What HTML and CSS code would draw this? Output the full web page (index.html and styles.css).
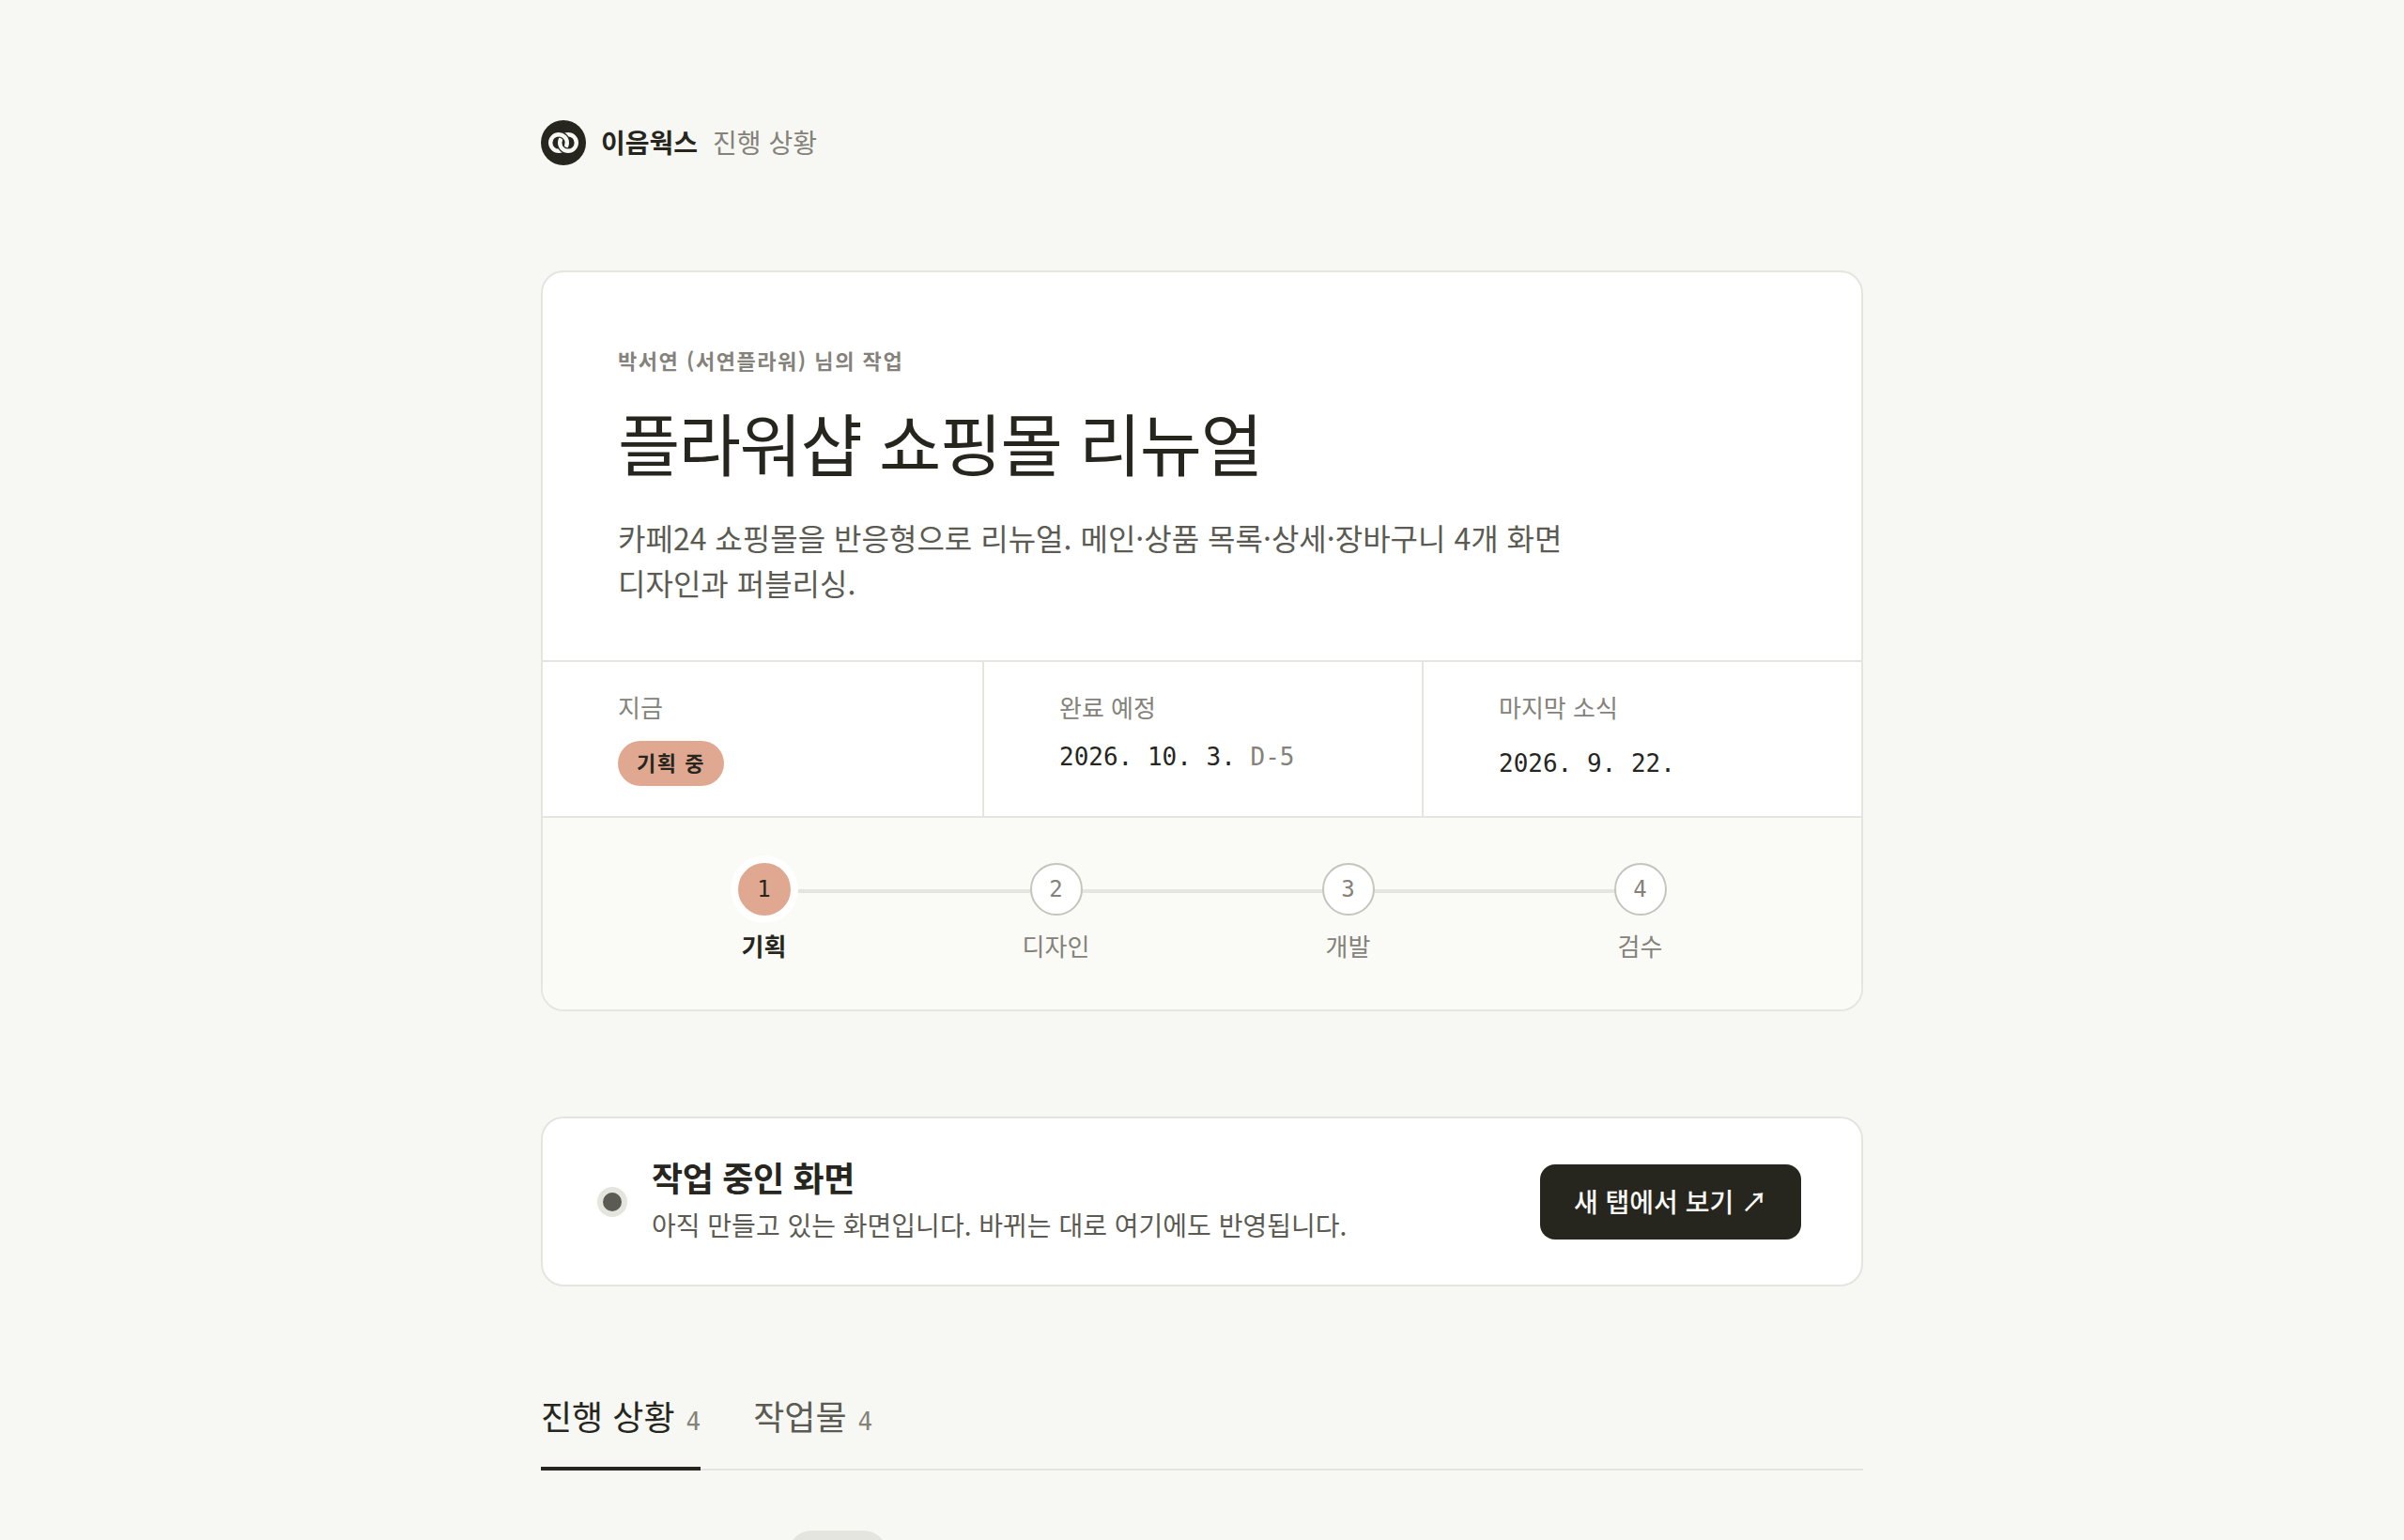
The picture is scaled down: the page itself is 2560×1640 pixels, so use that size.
FILE: index.html
```html
<!DOCTYPE html>
<html lang="ko">
<head>
  <meta charset="UTF-8" />
  <meta name="viewport" content="width=device-width, initial-scale=1" />
  <title>플라워샵 쇼핑몰 리뉴얼 - 이음웍스</title>
  <link rel="stylesheet" href="styles.css">
</head>
<body>
  <div class="container">
    <header class="brand">
      <!-- two linked rings: right one on top below, left one on top above -->
      <svg class="brand-logo" viewBox="0 0 48 48" aria-hidden="true">
        <circle cx="24" cy="24" r="24" fill="#26261f" />
        <g fill="none">
          <circle cx="19" cy="24" r="8.8" stroke="#f7f8f3" stroke-width="4.4" />
          <path d="M29 15.2A8.8 8.8 0 0 0 29 32.8" stroke="#26261f" stroke-width="6.8" />
          <circle cx="29" cy="24" r="8.8" stroke="#f7f8f3" stroke-width="4.4" />
          <path d="M19 15.2A8.8 8.8 0 0 1 27.8 24" stroke="#26261f" stroke-width="6.8" />
          <path d="M18 15.25A8.8 8.8 0 0 1 27.8 24.500" stroke="#f7f8f3" stroke-width="4.4" />
        </g>
      </svg>
      <span class="brand-name">이음웍스</span>
      <span class="brand-page">진행 상황</span>
    </header>

    <main>
      <section class="card project">
        <div class="project-head">
          <p class="eyebrow">박서연 (서연플라워) 님의 작업</p>
          <h1>플라워샵 쇼핑몰 리뉴얼</h1>
          <p class="summary">카페24 쇼핑몰을 반응형으로 리뉴얼. 메인·상품 목록·상세·장바구니 4개 화면 디자인과 퍼블리싱.</p>
        </div>

        <dl class="facts">
          <div class="fact">
            <dt>지금</dt>
            <dd><span class="pill">기획 중</span></dd>
          </div>
          <div class="fact">
            <dt>완료 예정</dt>
            <dd class="mono">2026. 10. 3. <span class="dday">D-5</span></dd>
          </div>
          <div class="fact">
            <dt>마지막 소식</dt>
            <dd class="mono tall">2026. 9. 22.</dd>
          </div>
        </dl>

        <ol class="steps">
          <li class="step current" aria-current="step"><span class="step-num">1</span><span class="step-name">기획</span></li>
          <li class="step"><span class="step-num">2</span><span class="step-name">디자인</span></li>
          <li class="step"><span class="step-num">3</span><span class="step-name">개발</span></li>
          <li class="step"><span class="step-num">4</span><span class="step-name">검수</span></li>
        </ol>
      </section>

      <section class="card preview">
        <span class="dot"></span>
        <div class="preview-text">
          <h2>작업 중인 화면</h2>
          <p>아직 만들고 있는 화면입니다. 바뀌는 대로 여기에도 반영됩니다.</p>
        </div>
        <a class="button" href="#" target="_blank">새 탭에서 보기 ↗</a>
      </section>

      <div class="tabs" role="tablist">
        <button class="tab active" type="button" role="tab" aria-selected="true">진행 상황<span class="count">4</span></button>
        <button class="tab" type="button" role="tab" aria-selected="false">작업물<span class="count">4</span></button>
      </div>

      <div class="feed">
        <span class="feed-tag"></span>
      </div>
    </main>
  </div>
</body>
</html>
```

FILE: styles.css
```css
/* Base */
*, *::before, *::after {
  box-sizing: border-box;
}
body {
  margin: 0;
  font-family: "Noto Sans CJK KR", sans-serif;
  font-size: 28px;
  line-height: 42px;
  background-color: #f7f8f3;
  color: #26261f;
  word-break: keep-all;
}
h1, h2, p, dl, dd, ol {
  margin: 0;
  padding: 0;
}
.container {
  max-width: 1504px;
  margin: 0 auto;
  padding: 128px 48px 0;
}

/* Brand */
.brand {
  display: flex;
  gap: 16px;
  height: 48px;
  margin-bottom: 112px;
  line-height: 46px;
}
.brand-logo {
  width: 48px;
  height: 48px;
}
.brand-name {
  font-weight: 700;
}
.brand-page {
  color: #84827a;
}

/* Cards */
.card {
  margin-bottom: 112px;
  background-color: #fff;
  border: 2px solid #e4e5df;
  border-radius: 24px;
  overflow: hidden;
}
.project-head {
  padding: 80px 80px 59px;
}
.eyebrow {
  margin-bottom: 26px;
  font-size: 22px;
  line-height: 26px;
  font-weight: 700;
  letter-spacing: 0.07em;
  color: #84827a;
}
h1 {
  margin-bottom: 30px;
  font-size: 72px;
  line-height: 96px;
  font-weight: 400;
  letter-spacing: -0.02em;
}
.summary {
  max-width: 1040px;
  font-size: 32px;
  line-height: 48px;
  color: #5b5b53;
}

/* Facts */
.facts {
  display: grid;
  grid-template-columns: repeat(3, 1fr);
  border-top: 2px solid #e4e5df;
  border-bottom: 2px solid #e4e5df;
}
.fact {
  padding: 32px 80px;
}
.fact + .fact {
  border-left: 2px solid #e4e5df;
}
.fact dt {
  margin-bottom: 20px;
  font-size: 26px;
  line-height: 32px;
  color: #84827a;
}
.fact dd {
  font-size: 26px;
  line-height: 34px;
}
.fact dd.tall {
  line-height: 48px;
}
.mono,
.count,
.step-num {
  font-family: "DejaVu Sans Mono", monospace;
}
.dday {
  color: #84827a;
}
.pill {
  display: block;
  width: fit-content;
  padding: 8px 20px 12px;
  border-radius: 24px;
  font-size: 22px;
  line-height: 28px;
  font-weight: 700;
  letter-spacing: 0.07em;
  background-color: #e0a890;
}

/* Steps */
.steps {
  display: grid;
  grid-template-columns: repeat(4, 1fr);
  padding: 48px 80px;
  list-style: none;
  background-color: #fafbf6;
}
.step {
  position: relative;
  display: flex;
  flex-direction: column;
  align-items: center;
  gap: 12px;
  color: #84827a;
}
/* connector to the previous step */
.step + .step::before {
  content: "";
  position: absolute;
  top: 28px;
  right: 50%;
  width: 100%;
  height: 4px;
  background-color: #e4e5df;
}
.step-num {
  position: relative;
  z-index: 1;
  width: 56px;
  height: 56px;
  border: 2px solid #c5c5be;
  border-radius: 50%;
  font-size: 24px;
  line-height: 52px;
  text-align: center;
  background-color: #fff;
}
.step-name {
  font-size: 26px;
  line-height: 40px;
}
.step.current {
  color: #26261f;
}
.step.current .step-num {
  z-index: 2;
  border-color: #e0a890;
  background-color: #e0a890;
  box-shadow: 0 0 0 8px #fff;
}
.step.current .step-name {
  font-weight: 700;
}

/* Preview */
.preview {
  display: flex;
  align-items: center;
  gap: 32px;
  padding: 40px 64px;
}
.dot {
  width: 20px;
  height: 20px;
  border-radius: 50%;
  background-color: #5b5b53;
  box-shadow: 0 0 0 6px #e4e5df;
}
.preview-text {
  flex: 1;
  padding-bottom: 3px;
}
h2 {
  margin-bottom: 8px;
  font-size: 36px;
  line-height: 44px;
  font-weight: 700;
  letter-spacing: -0.01em;
}
.preview-text p {
  color: #5b5b53;
}
.button {
  padding: 18px 36px 20px;
  border-radius: 16px;
  font-weight: 500;
  color: #f7f8f3;
  background-color: #26261f;
  text-decoration: none;
}

/* Tabs */
.tabs {
  display: flex;
  gap: 56px;
  border-bottom: 2px solid #e4e5df;
}
.tab {
  margin-bottom: -2px;
  padding: 0 0 30px;
  border: 0;
  border-bottom: 4px solid transparent;
  font: inherit;
  font-size: 36px;
  line-height: 50px;
  color: #5b5b53;
  background: none;
  cursor: pointer;
}
.tab.active {
  border-bottom-color: #26261f;
  color: #26261f;
}
.count {
  margin-left: 12px;
  font-size: 26px;
  line-height: 1;
  color: #84827a;
}

/* Feed, continues below the fold */
.feed {
  padding: 64px 0 64px 264px;
}
.feed-tag {
  display: block;
  width: 104px;
  height: 48px;
  border-radius: 24px;
  background-color: #e4e5df;
}
```
